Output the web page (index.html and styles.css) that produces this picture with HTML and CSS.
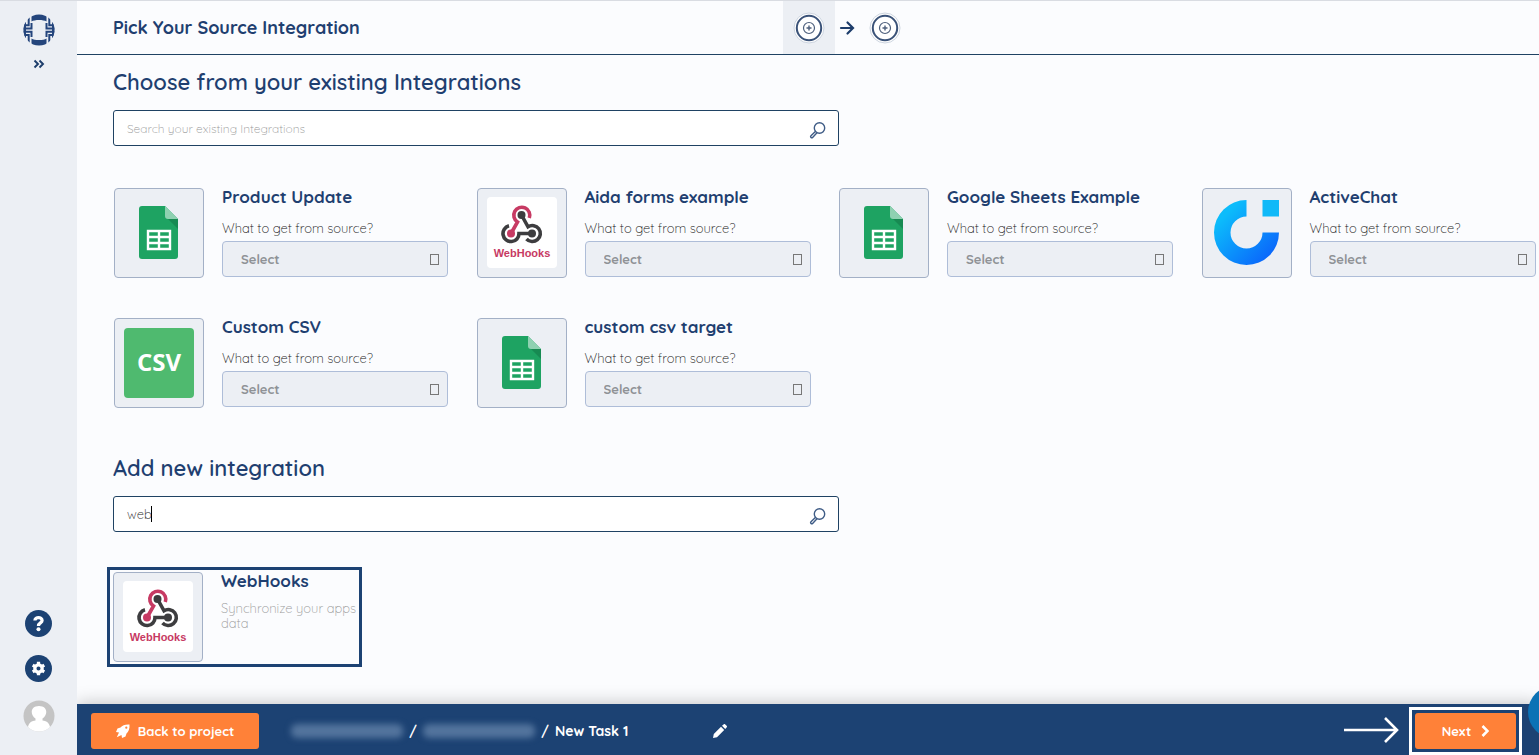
FILE: index.html
```html
<!DOCTYPE html>
<html lang="en">

<head>
    <meta charset="UTF-8">
    <meta name="viewport" content="width=device-width, initial-scale=1.0">
    <title>Pick Your Source Integration</title>
    <link rel="stylesheet" href="styles.css">
</head>

<body>
    <!-- shared logos -->
    <svg class="sprite" aria-hidden="true">
        <defs>
            <linearGradient id="chat-fill" x1="0" y1="0" x2="1" y2="1">
                <stop offset="0.2" stop-color="#0cbcfb" />
                <stop offset="0.9" stop-color="#0a63fb" />
            </linearGradient>
            <clipPath id="logo-clip">
                <circle cx="16" cy="16" r="15.5" />
            </clipPath>
        </defs>
        <symbol id="sheets" viewBox="1 1 88 88">
            <path d="M28 18H51L64 31V68a3 3 0 0 1-3 3H28a3 3 0 0 1-3-3V21a3 3 0 0 1 3-3Z" fill="#1ea362" />
            <path d="M54 31H64V41Z" fill="#178a52" />
            <path d="M51 18L64 31H54a3 3 0 0 1-3-3Z" fill="#8ed1b1" />
            <path d="M34 43H56V61H34ZM34 49H56M34 55H56M45 43V61" fill="none" stroke="#fff" stroke-width="2.4" />
        </symbol>
        <symbol id="webhooks" viewBox="1 1 88 88">
            <rect x="10" y="9" width="70" height="71" rx="4" fill="#fff" />
            <g fill="none" stroke-width="3.6">
                <path d="M32 37.800A8 8 0 1 0 42 45.500H55" stroke="#3d3d3f" />
                <path d="M44.500 27L51 38.800A8 8 0 1 1 49.500 51" stroke="#3d3d3f" />
                <path d="M52.300 30A8 8 0 1 0 40.500 34L34 45.500" stroke="#c73a63" />
            </g>
            <circle cx="44.500" cy="27" r="4" fill="#3d3d3f" />
            <circle cx="55" cy="45.500" r="4" fill="#3d3d3f" />
            <circle cx="34" cy="45.500" r="4" fill="#c73a63" />
        </symbol>
        <symbol id="activechat" viewBox="1 1 88 88">
            <path d="M44.500 12A32.500 32.500 0 1 0 77 44.500H60.500A16 16 0 1 1 44.500 28.500Z" fill="url(#chat-fill)" />
            <rect x="60.500" y="12" width="16.500" height="16.500" fill="#10b9f8" />
        </symbol>
        <symbol id="magnifier" viewBox="0 0 18 18">
            <circle cx="10.500" cy="7" r="5.200" />
            <path d="M6.600 10.300L2 14.800a1 1 0 0 0 1.600 1.600L8 11.700" />
        </symbol>
        <symbol id="step" viewBox="0 0 32 32">
            <circle cx="16" cy="16" r="15" fill="#fff" stroke="#cdd5e0" />
            <circle cx="16" cy="16" r="12.200" fill="#fff" stroke="#3a5278" stroke-width="2" />
            <circle cx="16" cy="16" r="5.500" fill="none" stroke="#4d5f7c" stroke-width="1.200" />
            <path d="M13.500 16H18.500M16 13.500V18.500" stroke="#4d5f7c" stroke-width="1.400" />
        </symbol>
    </svg>

    <nav class="sidebar">
        <a href="#" class="logo" aria-label="Home">
            <svg viewBox="0 0 32 32" width="32" height="32">
                <g clip-path="url(#logo-clip)">
                    <path d="M8.500 0H23.500V7.500C20.500 5.500 11.500 5.500 8.500 7.500ZM8.500 32H23.500V24.500C20.500 26.500 11.500 26.500 8.500 24.500Z" fill="#24457c" />
                    <g fill="none" stroke="#24457c" stroke-width="2">
                        <path d="M0 14.500H8.500V9M32 14.500H23.500V9M0 17.800H8.500V23M32 17.800H23.500V23" />
                        <path d="M0 11.200H5.700V2M32 11.200H26.300V2M0 21H5.700V30M32 21H26.300V30" />
                        <path d="M1.500 8V24M30.500 8V24" stroke-width="3" />
                    </g>
                </g>
            </svg>
        </a>
        <button class="expand" type="button" aria-label="Expand menu">
            <svg viewBox="0 0 12 10" width="12" height="10">
                <path d="M1.500 1.500L5 5L1.500 8.500M6.500 1.500L10 5L6.500 8.500" fill="none" stroke="#1d3d6b" stroke-width="1.900" />
            </svg>
        </button>
        <div class="sidebar-bottom">
            <button class="round" type="button" aria-label="Help">
                <svg viewBox="0 0 28 28" width="27" height="27">
                    <path d="M10.300 11C10.300 7 17.700 7 17.700 11C17.700 13.500 14 13.400 14 16.500" fill="none" stroke="#fff" stroke-width="3.400" />
                    <circle cx="14" cy="20" r="2.100" fill="#fff" />
                </svg>
            </button>
            <button class="round" type="button" aria-label="Settings">
                <svg viewBox="0 0 28 28" width="27" height="27">
                    <circle cx="14" cy="14" r="3.800" fill="none" stroke="#fff" stroke-width="3.400" />
                    <path d="M14 7V10M14 18V21M8 10.500L10.600 12M17.400 16L20 17.500M8 17.500L10.600 16M17.400 12L20 10.500" stroke="#fff" stroke-width="3.400" />
                </svg>
            </button>
            <button class="avatar" type="button" aria-label="Account">
                <svg viewBox="0 0 32 32" width="32" height="32">
                    <circle cx="16" cy="16" r="15.500" fill="#c4c4c4" />
                    <path d="M5 27C6 22 9 21 12.500 20.500V18.500C7 15 7 6 16 6S25 15 19.500 18.500V20.500C23 21 26 22 27 27A15.500 15.500 0 0 1 5 27Z" fill="#fff" />
                </svg>
            </button>
        </div>
    </nav>

    <div class="page">
        <header class="header">
            <h1>Pick Your Source Integration</h1>
            <div class="steps">
                <span class="step active"><svg width="32" height="32"><use href="#step" /></svg></span>
                <svg class="arrow" viewBox="0 0 16 16" width="16" height="16">
                    <path d="M2 8H13M8.500 2.500L14 8L8.500 13.500" fill="none" stroke="#1d3d6b" stroke-width="2.200" stroke-linecap="round" />
                </svg>
                <span class="step"><svg width="32" height="32"><use href="#step" /></svg></span>
            </div>
        </header>

        <main class="content">
            <h2>Choose from your existing Integrations</h2>
            <div class="search">
                <input type="text" aria-label="Search existing integrations" placeholder="Search your existing Integrations">
                <svg class="search-icon"><use href="#magnifier" /></svg>
            </div>

            <div class="cards">
                <div class="card">
                    <div class="tile"><svg><use href="#sheets" /></svg></div>
                    <div class="info">
                        <h3>Product Update</h3>
                        <label for="source-1">What to get from source?</label>
                        <div class="select"><select id="source-1"><option>Select</option></select></div>
                    </div>
                </div>
                <div class="card">
                    <div class="tile">
                        <svg>
                            <use href="#webhooks" />
                            <text x="44" y="68" text-anchor="middle" class="webhooks-text">WebHooks</text>
                        </svg>
                    </div>
                    <div class="info">
                        <h3>Aida forms example</h3>
                        <label for="source-2">What to get from source?</label>
                        <div class="select"><select id="source-2"><option>Select</option></select></div>
                    </div>
                </div>
                <div class="card">
                    <div class="tile"><svg><use href="#sheets" /></svg></div>
                    <div class="info">
                        <h3>Google Sheets Example</h3>
                        <label for="source-3">What to get from source?</label>
                        <div class="select"><select id="source-3"><option>Select</option></select></div>
                    </div>
                </div>
                <div class="card">
                    <div class="tile"><svg><use href="#activechat" /></svg></div>
                    <div class="info">
                        <h3>ActiveChat</h3>
                        <label for="source-4">What to get from source?</label>
                        <div class="select"><select id="source-4"><option>Select</option></select></div>
                    </div>
                </div>
                <div class="card">
                    <div class="tile">
                        <svg>
                            <rect x="9" y="9" width="70" height="70" rx="4" fill="#4fba6f" />
                            <text x="44" y="52" text-anchor="middle" class="csv-text">CSV</text>
                        </svg>
                    </div>
                    <div class="info">
                        <h3>Custom CSV</h3>
                        <label for="source-5">What to get from source?</label>
                        <div class="select"><select id="source-5"><option>Select</option></select></div>
                    </div>
                </div>
                <div class="card">
                    <div class="tile"><svg><use href="#sheets" /></svg></div>
                    <div class="info">
                        <h3>custom csv target</h3>
                        <label for="source-6">What to get from source?</label>
                        <div class="select"><select id="source-6"><option>Select</option></select></div>
                    </div>
                </div>
            </div>

            <h2>Add new integration</h2>
            <div class="search focused">
                <input type="text" aria-label="Search new integrations" value="web">
                <svg class="search-icon"><use href="#magnifier" /></svg>
            </div>

            <a href="#" class="new-card">
                <div class="tile">
                    <svg>
                        <use href="#webhooks" />
                        <text x="44" y="68" text-anchor="middle" class="webhooks-text">WebHooks</text>
                    </svg>
                </div>
                <div class="info">
                    <h3>WebHooks</h3>
                    <p>Synchronize your apps data</p>
                </div>
            </a>
        </main>

        <footer class="footer">
            <button class="btn back" type="button">
                <svg viewBox="0 0 14 14" width="14" height="14">
                    <path d="M13.500 .5C9 .2 6.500 1.500 4.500 3.500L1.500 4.500L0 8L3 8.500L.8 13.200L5.500 11L6 14L9.500 12.500L10.500 9.500C12.500 7.500 13.800 5 13.500 .5Z" fill="#fff" />
                    <circle cx="10.300" cy="3.700" r="1.100" fill="#ff8138" />
                </svg>
                Back to project
            </button>
            <div class="crumbs">
                <span class="hidden-name"></span>
                <span>/</span>
                <span class="hidden-name"></span>
                <span>/</span>
                <span>New Task 1</span>
            </div>
            <button class="edit" type="button" aria-label="Rename task">
                <svg viewBox="0 0 14 14" width="14" height="14">
                    <path d="M0 14L.8 10L8 2.800L11.200 6L4 13.200ZM9 1.800L10.500 .4a1.300 1.300 0 0 1 1.800 0L13.600 1.700a1.300 1.300 0 0 1 0 1.800L12.200 5Z" fill="#fff" />
                </svg>
            </button>
            <svg class="pointer" viewBox="0 0 58 28" width="58" height="28">
                <path d="M1 13H54M42 1L54 13L42 25" fill="none" stroke="#fff" stroke-width="2.600" />
            </svg>
            <div class="next-frame">
                <button class="btn next" type="button">
                    Next
                    <svg viewBox="0 0 8 12" width="8" height="12">
                        <path d="M1.500 1L6.500 6L1.500 11" fill="none" stroke="#fff" stroke-width="2.600" />
                    </svg>
                </button>
            </div>
            <button class="chat" type="button" aria-label="Open chat"></button>
        </footer>
    </div>
</body>

</html>
```
FILE: styles.css
```css
* {
    box-sizing: border-box;
}

body {
    margin: 0;
    display: flex;
    min-height: 100vh;
    overflow: hidden;
    border-top: 1px solid #d9dce2;
    background-color: #fbfcfe;
    color: #1f3f70;
    font-family: Quicksand, Lato, sans-serif;
}

h1,
h2,
h3,
p {
    margin: 0;
}

button {
    padding: 0;
    border: none;
    background: none;
    font-family: inherit;
    cursor: pointer;
}

svg {
    display: block;
}

.sprite {
    position: absolute;
    width: 0;
    height: 0;
}

.webhooks-text {
    fill: #c73a63;
    font: bold 11px "Liberation Sans", sans-serif;
}

.csv-text {
    fill: #fff;
    font: bold 24px "Open Sans", sans-serif;
}

/* sidebar */
.sidebar {
    flex: none;
    width: 77px;
    padding: 13px 0 23px;
    display: flex;
    flex-direction: column;
    align-items: center;
    background-color: #eceff4;
}

.expand {
    margin-top: 13px;
}

.sidebar-bottom {
    margin-top: auto;
    display: flex;
    flex-direction: column;
    align-items: center;
    gap: 18px;
}

.round {
    width: 27px;
    height: 27px;
    border-radius: 50%;
    background-color: #1c4273;
}

/* header */
.page {
    flex: 1;
    min-width: 0;
    display: flex;
    flex-direction: column;
}

.header {
    height: 54px;
    padding-left: 36px;
    display: grid;
    grid-template-columns: 47% 1fr;
    align-items: center;
    border-bottom: 1px solid #1f4263;
}

.header h1 {
    font-size: 18px;
    line-height: 24px;
}

.steps {
    height: 100%;
    display: flex;
    align-items: center;
    gap: 4px;
}

.step {
    height: 100%;
    padding: 0 10px;
    display: flex;
    align-items: center;
}

.step.active {
    background-color: #eceff4;
}

/* content */
.content {
    flex: 1;
    padding: 13px 3px 0 36px;
}

.content h2 {
    font-size: 22px;
    font-weight: 600;
    line-height: 28px;
}

.search {
    position: relative;
    width: 51%;
    margin-top: 14px;
}

.search input {
    display: block;
    width: 100%;
    height: 36px;
    padding: 0 48px 0 13px;
    border: 1px solid #1f4263;
    border-radius: 3px;
    outline: none;
    background-color: #fff;
    color: #222;
    font-family: inherit;
    font-size: 13px;
    font-weight: 300;
}

.search input::placeholder {
    color: #999;
    font-size: 12px;
}

.search-icon {
    position: absolute;
    top: 11px;
    right: 12px;
    width: 18px;
    height: 18px;
    fill: none;
    stroke: #3f5c86;
    stroke-width: 1.4;
}

/* text caret */
.search.focused::after {
    content: "";
    position: absolute;
    top: 10px;
    left: 38px;
    width: 1px;
    height: 16px;
    background-color: #000;
}

.cards {
    margin: 42px 0 46px 1px;
    display: grid;
    grid-template-columns: repeat(4, 1fr);
    gap: 40px 28px;
}

.card {
    display: flex;
    gap: 18px;
}

.tile {
    flex: none;
    width: 90px;
    height: 90px;
    border: 1px solid #a3b0c6;
    border-radius: 4px;
    background-color: #eceff4;
}

.tile svg {
    width: 88px;
    height: 88px;
}

.info h3 {
    font-size: 17px;
    line-height: 18px;
}

.card label {
    display: block;
    margin: 13px 0 4px;
    color: #111;
    font-size: 13px;
    font-weight: 300;
    line-height: 18px;
}

.select {
    position: relative;
    width: 226px;
}

.select select {
    display: block;
    width: 100%;
    height: 36px;
    padding: 0 18px;
    border: 1px solid #aebdd8;
    border-radius: 4px;
    background-color: #eceff4;
    appearance: none;
    color: #8f9296;
    font-family: inherit;
    font-size: 13px;
    font-weight: bold;
}

.select::after {
    content: "";
    position: absolute;
    top: 13px;
    right: 9px;
    width: 7px;
    height: 9px;
    border: 1px solid #777;
    pointer-events: none;
}

.new-card {
    width: 255px;
    margin: 35px 0 0 -6px;
    padding: 2px 0 2px 3px;
    display: flex;
    gap: 18px;
    border: 3px solid #1c4273;
    color: inherit;
    text-decoration: none;
}

.new-card p {
    margin-top: 11px;
    color: #999;
    font-size: 13px;
    font-weight: 300;
    line-height: 15px;
}

/* bottom bar */
.footer {
    position: relative;
    height: 51px;
    padding: 2px 17px 0 14px;
    display: flex;
    align-items: center;
    background-color: #1c4273;
    box-shadow: 0 0 18px rgba(0, 0, 0, .25);
    clip-path: inset(-20px 0 0 0);
}

.btn {
    height: 36px;
    display: flex;
    align-items: center;
    justify-content: center;
    border-radius: 3px;
    background-color: #ff8138;
    color: #fff;
    font-size: 13px;
    font-weight: bold;
}

.back {
    width: 168px;
    gap: 8px;
}

.crumbs {
    margin-left: 32px;
    display: flex;
    align-items: center;
    gap: 6px;
    color: #fff;
    font-size: 14px;
    font-weight: bold;
}

.hidden-name {
    width: 112px;
    height: 14px;
    border-radius: 6px;
    background-color: #53749d;
    filter: blur(3px);
}

.edit {
    margin-left: 85px;
}

.pointer {
    margin-left: auto;
}

.next-frame {
    margin-left: 8px;
    padding: 3px;
    border: 3px solid #fff;
}

.next {
    width: 101px;
    gap: 10px;
}

.chat {
    position: absolute;
    top: -18px;
    right: -41px;
    width: 52px;
    height: 52px;
    border-radius: 50%;
    background-color: #0b72b5;
}
```
